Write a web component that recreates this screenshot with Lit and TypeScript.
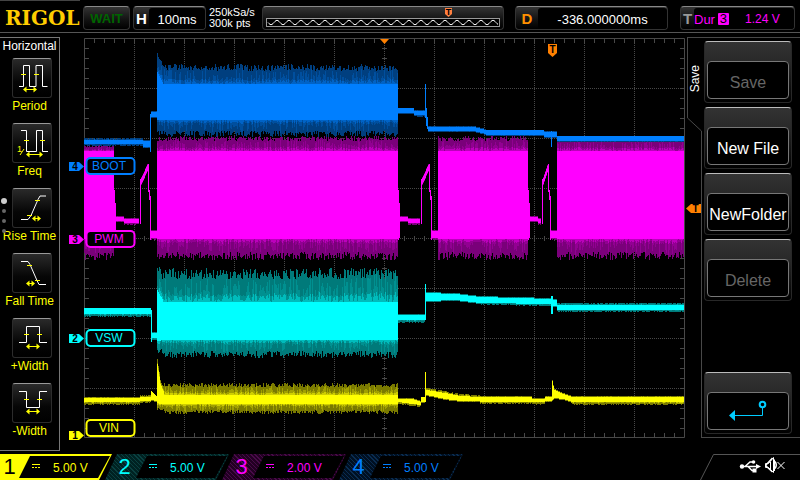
import { LitElement, html, svg, css } from "lit";
import { customElement, property } from "lit/decorators.js";

/* ---------- trace geometry ---------- */

type Knot = [x: number, top: number, bottom: number];

interface Segment {
  knots: Knot[];
  up?: number; // height of the noisy fringe above the core
  down?: number; // height of the noisy fringe below the core
}

interface Trace {
  id: number;
  name: string;
  colors: [string, string, string, string]; // from the outer fringe to the core
  zeroY: number;
  labelY: number;
  segments: Segment[];
}

const flat = (x0: number, x1: number, top: number, bottom: number, up = 0, down = 0): Segment => ({
  knots: [[x0, top, bottom], [x1, top, bottom]],
  up,
  down,
});

function randomSource(seed: number) {
  let s = seed;
  return () => {
    s = (s * 1664525 + 1013904223) % 4294967296;
    return s / 4294967296;
  };
}

function tracePaths(trace: Trace): string[] {
  const rnd = randomSource(trace.id * 7919);
  let outer = "";
  let middle = "";
  let inner = "";
  let core = "";
  for (const seg of trace.segments) {
    const up = seg.up ?? 0;
    const down = seg.down ?? 0;
    for (let i = 0; i < seg.knots.length - 1; i++) {
      const [ax, at, ab] = seg.knots[i];
      const [bx, bt, bb] = seg.knots[i + 1];
      for (let x = ax; x < bx; x++) {
        const f = (x - ax) / (bx - ax);
        const top = Math.round(at + (bt - at) * f);
        const bottom = Math.round(ab + (bb - ab) * f);
        const a = up * (0.66 + rnd() * 0.34);
        const b = down * (0.62 + rnd() * 0.38);
        const r = rnd();
        const q = rnd();
        core += `M${x} ${top}V${bottom}`;
        if (up || down) {
          outer += `M${x} ${Math.round(top - a)}V${Math.round(bottom + b)}`;
          middle += `M${x} ${Math.round(top - a * (0.2 + r * r * 0.7))}V${Math.round(bottom + b * (0.15 + q * q * 0.7))}`;
          inner += `M${x} ${Math.round(top - a * r * 0.3)}V${Math.round(bottom + b * q * 0.25)}`;
        }
      }
    }
  }
  return [outer, middle, inner, core];
}

const pwmGap = (x: number, rise: number, low: number, end: number): Segment[] => [
  { knots: [[x, 190, 240], [x + 2, 216, 236]] },
  flat(x + 2, x + 10, 217, 221, 1, 1),
  flat(x + 10, rise - 1, 219, 223, 1, 2),
  flat(rise, rise + 1, 179, 224),
  { knots: [[rise + 1, 178, 184], [low - 2, 163, 169]], up: 1, down: 1 },
  flat(low - 2, low - 1, 164, 192),
  flat(low - 1, low, 190, 200),
  flat(low, low + 1, 196, 240),
  flat(low + 1, end, 231, 238, 1, 2),
];

const TRACES: Trace[] = [
  {
    id: 1,
    name: "VIN",
    colors: ["#7a7a00", "#a0a000", "#cfcf00", "#ffff00"],
    zeroY: 435,
    labelY: 428,
    segments: [
      flat(84, 140, 398, 402, 1, 3),
      flat(140, 151, 397, 401, 2, 2),
      { knots: [[151, 391, 400], [157, 397, 401]], down: 1 },
      { knots: [[157, 364, 403], [160, 384, 404], [164, 393, 404]], up: 5, down: 7 },
      flat(164, 398, 395, 404, 12, 10),
      { knots: [[398, 399, 402], [412, 399, 404], [421, 402, 405]], up: 1, down: 2 },
      flat(421, 425, 397, 402, 0, 1),
      flat(425, 426, 372, 402),
      { knots: [[426, 390, 395], [445, 393, 399], [460, 396, 401], [480, 397, 401]], up: 2, down: 1 },
      flat(480, 532, 397, 402, 1, 2),
      flat(532, 545, 399, 402, 1, 3),
      flat(545, 552, 397, 401, 1, 1),
      { knots: [[552, 381, 400], [554, 390, 398], [563, 394, 399], [572, 397, 402]], up: 1, down: 1 },
      flat(572, 684, 397, 402, 1, 3),
    ],
  },
  {
    id: 2,
    name: "VSW",
    colors: ["#007a7a", "#009090", "#00bcbc", "#00ffff"],
    zeroY: 338,
    labelY: 338,
    segments: [
      flat(84, 151, 308, 314, 0, 3),
      flat(151, 152, 310, 342),
      flat(152, 157, 333, 338, 1, 2),
      { knots: [[157, 290, 341], [163, 301, 340]], up: 27, down: 14 },
      flat(163, 398, 302, 340, 34, 18),
      flat(398, 425, 315, 320, 1, 3),
      flat(425, 426, 284, 320),
      { knots: [[426, 293, 301], [455, 294, 300], [480, 297, 303]], up: 1, down: 1 },
      { knots: [[480, 297, 303], [551, 299, 304]], up: 1, down: 2 },
      flat(551, 553, 296, 314),
      flat(553, 557, 300, 306, 1, 1),
      flat(557, 684, 305, 310, 2, 2),
    ],
  },
  {
    id: 3,
    name: "PWM",
    colors: ["#7a007a", "#920092", "#bc00bc", "#ff00ff"],
    zeroY: 239,
    labelY: 239,
    segments: [
      flat(84, 114, 151, 239, 6, 21),
      ...pwmGap(114, 140, 150, 157),
      flat(157, 398, 151, 239, 15, 21),
      ...pwmGap(398, 421, 431, 438),
      flat(438, 528, 151, 239, 15, 21),
      ...pwmGap(528, 542, 550, 557),
      flat(557, 684, 151, 239, 14, 21),
    ],
  },
  {
    id: 4,
    name: "BOOT",
    colors: ["#003f7f", "#004f9e", "#0063c6", "#007fff"],
    zeroY: 166,
    labelY: 166,
    segments: [
      flat(84, 143, 140, 144, 2, 2),
      flat(143, 150, 141, 147, 1, 1),
      flat(150, 151, 114, 152),
      flat(151, 157, 112, 117, 1, 1),
      { knots: [[157, 72, 120], [163, 84, 120]], up: 22, down: 16 },
      flat(163, 398, 84, 120, 20, 17),
      flat(398, 414, 108, 113, 0, 1),
      flat(414, 425, 111, 115, 1, 2),
      flat(425, 426, 84, 118),
      { knots: [[426, 108, 126], [428, 126, 131]] },
      { knots: [[428, 127, 131], [474, 127, 131], [486, 130, 134]], up: 1, down: 1 },
      flat(486, 544, 130, 135, 0, 1),
      flat(544, 557, 132, 137, 1, 1),
      flat(551, 552, 131, 147),
      flat(557, 684, 136, 141, 0, 1),
    ],
  },
];

/* ---------- waveform display ---------- */

@customElement("scope-plot")
export class ScopePlot extends LitElement {
  static styles = css`
    :host { display: block; min-width: 0; position: relative; z-index: 1; }
    svg { display: block; width: 100%; overflow: visible; font-family: "Liberation Sans", Arial, sans-serif; }
    .frame, .ticks { stroke: #484848; fill: none; }
    .dots { stroke: #484848; fill: none; stroke-dasharray: 1 1; }
    .tag { fill: #000; stroke-width: 2; }
    .tag-name { font-size: 12px; text-anchor: middle; }
    .digit { font-size: 10px; font-weight: bold; text-anchor: middle; fill: #000; }
    .orange { fill: #ff8000; }
  `;

  private grid() {
    let dots = "";
    let ticks = "";
    for (let x = 134; x < 684; x += 50) dots += `M${x}.5 39V437`;
    for (let y = 88; y < 437; y += 50) dots += `M84 ${y}.5H684`;
    for (let x = 94; x < 684; x += 10) ticks += `M${x}.5 39v4M${x}.5 433v4M${x}.5 236v5`;
    for (let y = 48; y < 437; y += 10) ticks += `M85 ${y}.5h4M680 ${y}.5h4M382 ${y}.5h5`;
    return svg`
      <path class="dots" d=${dots} />
      <path class="ticks" d=${ticks} />
      <path class="frame" d="M84.5 38.5H684.5V437.5H84.5Z" />`;
  }

  private trace(t: Trace) {
    return svg`<g transform="translate(0.5 0)" shape-rendering="crispEdges" fill="none">
      ${tracePaths(t).map((d, i) => svg`<path d=${d} stroke=${t.colors[i]} />`)}
    </g>`;
  }

  private label(t: Trace) {
    const c = t.colors[3];
    const z = t.zeroY;
    return svg`
      <rect class="tag" x="86.5" y=${t.labelY - 8} width="48" height="16" rx="4" stroke=${c} />
      <text class="tag-name" x="109" y=${t.labelY + 4} fill=${c}>${t.name}</text>
      <path d=${`M69 ${z - 4}h10l5 4.5l-5 4.5h-10z`} fill=${c} />
      <text class="digit" x="75" y=${z + 4}>${t.id}</text>`;
  }

  render() {
    return html`<svg viewBox="60 33 627 421" role="img" aria-label="Waveforms">
      ${this.grid()}
      ${TRACES.map((t) => this.trace(t))}
      ${TRACES.map((t) => this.label(t))}
      <path class="orange" d="M380 39h9l-4.5 5z" />
      <path class="orange" d="M548 44h9v9l-4.5 4l-4.5-4z" />
      <text class="digit" x="552.5" y="53">T</text>
      <path class="orange" d="M686 208.5l5-4.5h10v9h-10z" />
      <text class="digit" x="695.5" y="212">T</text>
    </svg>`;
  }
}

/* ---------- measurement menu ---------- */

interface Measure {
  label: string;
  wave: string;
  ticks: [number, number][];
  span: [from: number, to: number, y: number];
  inverse?: boolean;
}

const MEASURES: Measure[] = [
  { label: "Period", wave: "M7 28.5h4.5v-21h6v21h6.500v-21h6.500v21h5", ticks: [[11, 16], [24, 16]], span: [11, 25, 31] },
  { label: "Freq", wave: "M9 7.5h5.5v21h10v-21h6v21h5.5", ticks: [[14, 17], [30, 17]], span: [14, 31, 31], inverse: true },
  { label: "Rise Time", wave: "M9 31.5h7l3-4l7-16l2-3.500h6", ticks: [[17, 27], [25, 12]], span: [20, 29, 30] },
  { label: "Fall Time", wave: "M9 8.5h7l2 3l7 16l2 4h7", ticks: [[17, 12], [25, 27]], span: [14, 23, 30] },
  { label: "+Width", wave: "M7 24.5h7.5v-16h13v16h7.5", ticks: [[14, 16], [27, 16]], span: [14, 28, 28] },
  { label: "-Width", wave: "M7 8.5h7.5v16h13v-16h7.5", ticks: [[14, 16], [27, 16]], span: [14, 28, 28] },
];

@customElement("measure-menu")
export class MeasureMenu extends LitElement {
  static styles = css`
    :host {
      display: flex; flex-direction: column; align-items: center; gap: 9px; position: relative;
      box-sizing: border-box; margin: 4px 0 3px; padding-bottom: 10px;
      border: 1px solid #777; border-left: 0; color: #fff; font-size: 12px; line-height: 16px;
    }
    h2 { margin: 0 0 -5px; font-size: 12px; font-weight: normal; }
    button {
      display: flex; flex-direction: column; align-items: center; width: 100%; padding: 0;
      border: 0; background: none; color: #ff0; font: inherit; white-space: nowrap; cursor: pointer;
    }
    .tile {
      width: 40px; height: 40px; margin-left: 4px; box-sizing: border-box; border: 1px solid #2c2c2c; border-top: 1px solid #999;
      border-radius: 3px; background: linear-gradient(#2a2a2a, #060606 60%, #000);
    }
    svg { display: block; margin: -1px; }
    .wave { fill: none; stroke: #fff; }
    .mark { fill: none; stroke: #ff0; }
    .head { fill: #ff0; }
    .one { fill: #ff0; font-size: 9px; }
    .pages { position: absolute; left: 0; top: 160px; display: flex; flex-direction: column; align-items: center; gap: 6px; width: 8px; }
    .pages i { width: 4px; height: 4px; border-radius: 50%; background: #666; }
    .pages i.on { width: 6px; height: 6px; background: #ccc; margin-bottom: -1px; }
  `;

  private icon(m: Measure) {
    const [a, b, y] = m.span;
    const ticks = m.ticks.map(([x, ty]) => `M${x - 2} ${ty + 0.5}h5`).join("");
    return html`<svg width="40" height="40" viewBox="0 0 40 40" aria-hidden="true">
      <path class="wave" d=${m.wave} />
      <path class="mark" d=${`${ticks}M${a + 1} ${y + 0.5}H${b - 1}`} />
      <path class="head" d=${`M${a} ${y + 0.5}l3.5-3v6zM${b} ${y + 0.5}l-3.5-3v6z`} />
      ${m.inverse ? svg`<text class="one" x="5" y="29">1</text><path class="mark" d="M12 26l-4 6" />` : ""}
    </svg>`;
  }

  render() {
    return html`
      <h2>Horizontal</h2>
      ${MEASURES.map((m) => html`<button type="button"><span class="tile">${this.icon(m)}</span>${m.label}</button>`)}
      <span class="pages" aria-hidden="true"><i class="on"></i><i></i><i></i><i></i></span>`;
  }
}

/* ---------- soft keys ---------- */

@customElement("soft-keys")
export class SoftKeys extends LitElement {
  static styles = css`
    :host { display: grid; grid-template-columns: 14px 1fr; margin-top: 4px; margin-bottom: 16px; color: #fff; }
    .tab { position: relative; border-top: 1px solid #484848; }
    .tab svg { position: absolute; left: 0; top: 0; height: 100%; width: 15px; }
    .outline { fill: none; stroke: #484848; }
    .title {
      position: relative; display: block; margin: 0; padding-bottom: 27px; width: 16px;
      writing-mode: vertical-rl; transform: rotate(180deg);
      font-size: 12px; font-weight: normal; line-height: 16px;
    }
    .keys {
      display: flex; flex-direction: column; gap: 4px; padding: 3px 8px 3px 3px;
      border-top: 1px solid #484848; border-bottom: 1px solid #484848;
    }
    button {
      display: block; box-sizing: border-box; width: 100%; height: 62px; padding: 19px 2px 3px;
      border: 1px solid #282828; border-top: 1px solid #bbb; border-radius: 4px;
      background: linear-gradient(#333, #2a2a2a 30%, #0c0c0c 80%, #000);
      color: #fff; font: 16px "Liberation Sans", Arial, sans-serif; cursor: pointer;
    }
    button:disabled { color: #666; cursor: default; }
    .face {
      display: flex; align-items: center; justify-content: center; box-sizing: border-box; height: 38px;
      padding-top: 6px; border: 1px solid #777; border-radius: 4px; background: #000; white-space: nowrap;
    }
    .back { margin-top: auto; }
    .back .face { padding-top: 0; }
    .line { fill: none; stroke: #0cf; }
    .ring { fill: #000; stroke: #0cf; stroke-width: 2; }
    .arrow { fill: #0cf; }
  `;

  render() {
    return html`
      <div class="tab">
        <svg aria-hidden="true"><path class="outline" d="M0.5 0V80L14.5 93V2000" /></svg>
        <h2 class="title">Save</h2>
      </div>
      <div class="keys">
        <button type="button" disabled><span class="face">Save</span></button>
        <button type="button"><span class="face">New File</span></button>
        <button type="button"><span class="face">NewFolder</span></button>
        <button type="button" disabled><span class="face">Delete</span></button>
        <button type="button" class="back" aria-label="Back">
          <span class="face">
            <svg width="38" height="22" viewBox="0 0 38 22" aria-hidden="true">
              <path class="line" d="M33.5 6V15.5H4" />
              <circle class="ring" cx="33.5" cy="4.5" r="2.8" />
              <path class="arrow" d="M0 15.5l6-5.5v11z" />
            </svg>
          </span>
        </button>
      </div>`;
  }
}

/* ---------- channel tab ---------- */

@customElement("channel-tab")
export class ChannelTab extends LitElement {
  @property({ type: Number }) channel = 1;
  @property() scale = "";

  static styles = css`
    :host { display: block; }
    button {
      display: flex; align-items: center; box-sizing: border-box; width: 124px; height: 26px; padding: 0 2px 0 0; border: 0;
      clip-path: polygon(12px 0, 100% 0, calc(100% - 13px) 100%, 0 100%);
      font: 12px "Liberation Sans", Arial, sans-serif; cursor: pointer;
    }
    .num { box-sizing: border-box; width: 31px; padding-left: 8px; text-align: center; font-size: 22px; line-height: 26px; }
    .value {
      display: flex; align-items: center; gap: 13px; flex: 1; box-sizing: border-box; height: 22px; padding: 2px 0 0 13px;
      background: #000; clip-path: polygon(11px 0, 100% 0, calc(100% - 12px) 100%, 0 100%);
    }
    .c1 { width: 112px; background: #ff0; color: #ff0; clip-path: polygon(0 0, 100% 0, calc(100% - 13px) 100%, 0 100%); }
    .c1 .num { width: 19px; padding: 0; color: #000; }
    .c2 { color: #0ff; background: repeating-linear-gradient(45deg, #002222 0 2px, #0a4040 2px 3px); }
    .c3 { color: #f0f; background: repeating-linear-gradient(45deg, #220022 0 2px, #480a48 2px 3px); }
    .c4 { color: #007fff; background: repeating-linear-gradient(45deg, #001022 0 2px, #0a2c50 2px 3px); }
    svg { stroke: currentColor; fill: none; margin-bottom: 4px; }
  `;

  render() {
    return html`<button type="button" class="c${this.channel}">
      <span class="num">${this.channel}</span>
      <span class="value">
        <svg width="8" height="6" aria-hidden="true"><path d="M0 1.5h8" /><path d="M0 4.5h8" stroke-dasharray="2 1" /></svg>
        ${this.scale}
      </span>
    </button>`;
  }
}

/* ---------- page ---------- */

function sinePath(x0: number, x1: number, period: number) {
  let d = "";
  for (let x = x0; x <= x1; x++) {
    const y = 15.5 + 2.2 * Math.sin(((x - x0) / period) * 2 * Math.PI);
    d += `${x === x0 ? "M" : "L"}${x} ${y.toFixed(1)}`;
  }
  return d;
}

@customElement("app-root")
export class AppRoot extends LitElement {
  static styles = css`
    :host {
      display: flex; flex-direction: column; min-height: 100vh; overflow: hidden; background: #000; color: #fff;
      font-family: "Liberation Sans", Arial, sans-serif; font-size: 13px;
    }
    header { display: flex; align-items: center; gap: 3px; height: 32px; padding-right: 5px; border-bottom: 1px solid #555; }
    .logo {
      box-sizing: border-box; width: 80px; height: 32px; margin: 0; padding-left: 5px; border-top: 1px solid #444;
      color: #fc0; font: bold 20px/34px "DejaVu Serif", serif;
    }
    .box {
      display: flex; align-items: center; box-sizing: border-box; height: 24px; margin-top: 4px; padding: 0;
      border: 1px solid #333; border-top: 1px solid #888; border-radius: 4px;
      background: linear-gradient(#333, #111 60%, #000);
    }
    .box b { font-size: 15px; text-align: center; }
    .screen {
      flex: 1; align-self: stretch; box-sizing: border-box; margin-top: 1px; padding-top: 1px; background: #000;
      text-align: center; line-height: 21px; border-radius: 3px;
    }
    .wait { width: 47px; justify-content: center; color: #006400; font-size: 13px; font-weight: bold; }
    .time { width: 73px; }
    .time b { width: 15px; }
    .rate { width: 50px; margin-top: 3px; font-size: 11px; line-height: 11px; white-space: nowrap; }
    .memory { flex: 1; min-width: 0; }
    .memory svg { display: block; width: 100%; height: 22px; }
    .track { fill: #000; stroke: #999; }
    .sine { fill: none; stroke: #fff; }
    .marker { fill: #ff8040; }
    .marker-t { font: bold 9px "Liberation Sans", sans-serif; text-anchor: middle; fill: #000; }
    .delay { width: 153px; margin-left: 8px; }
    .delay b { width: 22px; color: #ff9000; }
    .trigger { width: 115px; margin-left: 9px; color: #f0f; }
    .trigger b { width: 13px; color: #999; }
    .trigger .screen { display: flex; align-items: center; gap: 3px; }
    .badge { width: 11px; background: #f0f; color: #000; line-height: 12px; border-radius: 1px; }
    .level { margin-left: 13px; font-size: 12px; }
    main { flex: 1; display: grid; grid-template-columns: 60px minmax(0, 1fr) 113px; }
    footer { display: flex; height: 26px; }
    channel-tab + channel-tab { margin-left: -7px; }
    .status { width: 100px; height: 26px; margin-left: auto; }
    .edge { fill: none; stroke: #555; }
    .glyph { fill: none; stroke: #fff; }
    .solid { fill: #fff; }
  `;

  render() {
    return html`
      <header>
        <h1 class="logo">RIGOL</h1>
        <button type="button" class="box wait">WAIT</button>
        <div class="box time"><b>H</b><span class="screen">100ms</span></div>
        <div class="rate">250kSa/s<br />300k pts</div>
        <div class="box memory">
          <svg viewBox="0 0 240 22" role="img" aria-label="Memory position">
            <rect class="track" x="3.5" y="11.5" width="233" height="8" />
            <path class="sine" d=${sinePath(5, 235, 12)} />
            <path class="marker" d="M182 1h7v6l-3.5 3l-3.5-3z" />
            <text class="marker-t" x="185.5" y="8">T</text>
          </svg>
        </div>
        <div class="box delay"><b>D</b><span class="screen">-336.000000ms</span></div>
        <div class="box trigger">
          <b>T</b><span class="screen">Dur<span class="badge">3</span><span class="level">1.24 V</span></span>
        </div>
      </header>
      <main>
        <measure-menu></measure-menu>
        <scope-plot></scope-plot>
        <soft-keys></soft-keys>
      </main>
      <footer>
        <channel-tab channel="1" scale="5.00 V"></channel-tab>
        <channel-tab channel="2" scale="5.00 V"></channel-tab>
        <channel-tab channel="3" scale="2.00 V"></channel-tab>
        <channel-tab channel="4" scale="5.00 V"></channel-tab>
        <svg class="status" viewBox="0 0 100 26" role="img" aria-label="USB connected, sound off">
          <path class="edge" d="M0.5 26L13.5 0.5H100" />
          <path class="glyph" stroke-width="1.5" d="M41 12.5H58M45 12.5L50 8H53M48 12.5L52 16.500H54" />
          <circle class="solid" cx="42" cy="12.5" r="2.2" />
          <path class="solid" d="M56 10l5 2.5l-5 2.5z" />
          <circle class="solid" cx="53.500" cy="8" r="1.8" />
          <path class="solid" d="M52.500 14.500h4v4h-4z" />
          <path class="glyph" d="M65.5 9.500H68.500L73.500 3.500V18.500L68.500 13.500H65.500ZM70.500 8V15M74.500 5.500V17" />
          <path class="glyph" stroke-width="1.5" d="M65.500 11.500L72.500 4M65.500 11.500L72.500 18M75 7.500q2.500 3.500 0 7" />
          <path class="glyph" d="M77.500 8l7 7M84.500 8l-7 7" />
        </svg>
      </footer>`;
  }
}
